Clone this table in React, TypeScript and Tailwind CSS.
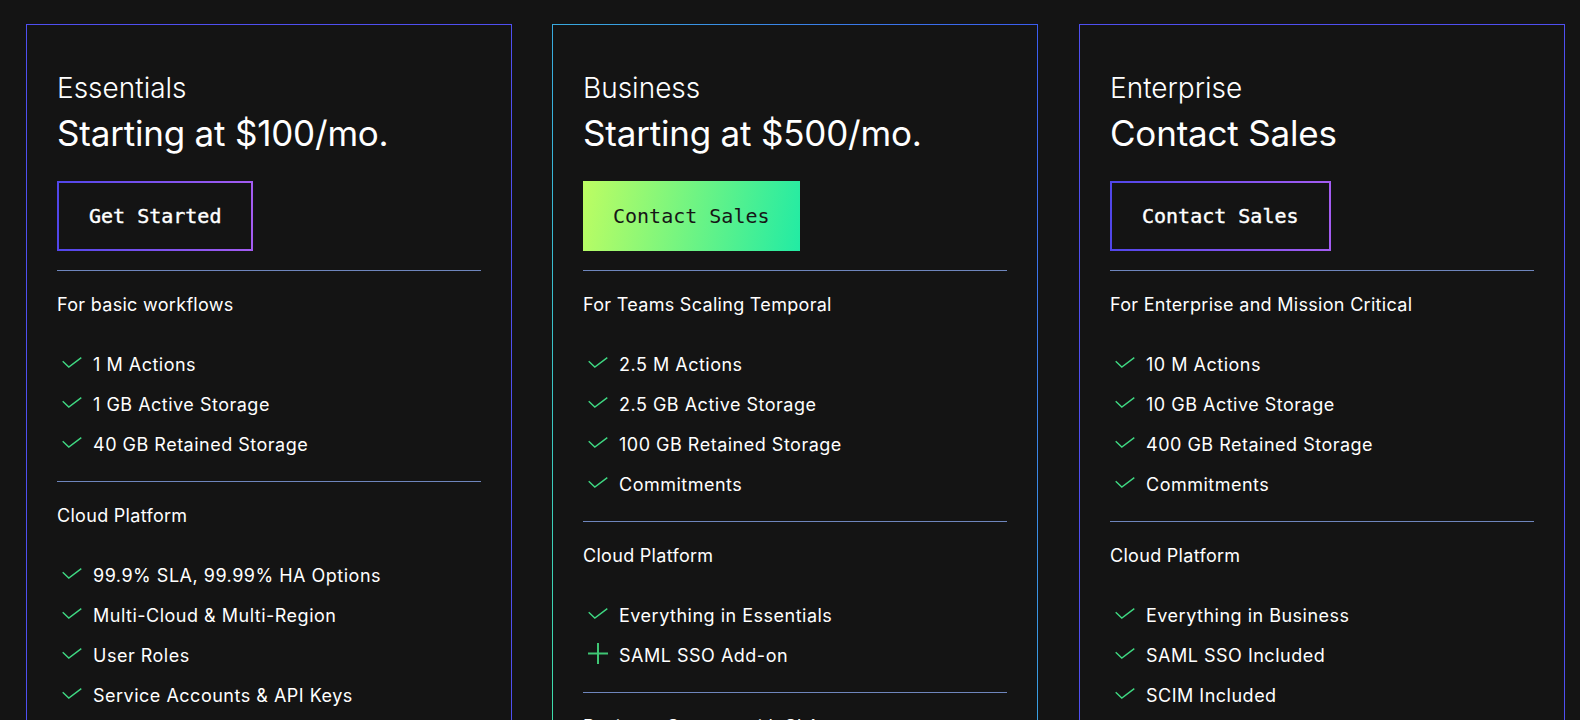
import { ReactNode } from 'react';

type Item = { text: string; plus?: boolean };
type Section = { heading: string; items: Item[] };
type Plan = {
  name: string;
  price: string;
  cta: string;
  featured?: boolean;
  sections: Section[];
};

const plans: Plan[] = [
  {
    name: 'Essentials',
    price: 'Starting at $100/mo.',
    cta: 'Get Started',
    sections: [
      {
        heading: 'For basic workflows',
        items: [{ text: '1 M Actions' }, { text: '1 GB Active Storage' }, { text: '40 GB Retained Storage' }],
      },
      {
        heading: 'Cloud Platform',
        items: [
          { text: '99.9% SLA, 99.99% HA Options' },
          { text: 'Multi-Cloud & Multi-Region' },
          { text: 'User Roles' },
          { text: 'Service Accounts & API Keys' },
          { text: 'Audit Logging' },
        ],
      },
    ],
  },
  {
    name: 'Business',
    price: 'Starting at $500/mo.',
    cta: 'Contact Sales',
    featured: true,
    sections: [
      {
        heading: 'For Teams Scaling Temporal',
        items: [
          { text: '2.5 M Actions' },
          { text: '2.5 GB Active Storage' },
          { text: '100 GB Retained Storage' },
          { text: 'Commitments' },
        ],
      },
      {
        heading: 'Cloud Platform',
        items: [{ text: 'Everything in Essentials' }, { text: 'SAML SSO Add-on', plus: true }],
      },
      {
        heading: 'Business Support with SLAs',
        items: [{ text: 'Email & Chat Support' }],
      },
    ],
  },
  {
    name: 'Enterprise',
    price: 'Contact Sales',
    cta: 'Contact Sales',
    sections: [
      {
        heading: 'For Enterprise and Mission Critical',
        items: [
          { text: '10 M Actions' },
          { text: '10 GB Active Storage' },
          { text: '400 GB Retained Storage' },
          { text: 'Commitments' },
        ],
      },
      {
        heading: 'Cloud Platform',
        items: [
          { text: 'Everything in Business' },
          { text: 'SAML SSO Included' },
          { text: 'SCIM Included' },
          { text: 'Priority Support' },
        ],
      },
    ],
  },
];

function Check() {
  return (
    <svg width="20" height="11" viewBox="0 0 20 11" fill="none" className="shrink-0 -mt-[3px]">
      <path d="M0.7 4.2 L6.8 10 L19.3 0.6" stroke="#3fd882" strokeWidth="1.4" />
    </svg>
  );
}

function Plus() {
  return (
    <svg width="20" height="21" viewBox="0 0 20 21" fill="none" className="shrink-0 -mt-[3px]">
      <path d="M10 0 V21 M0 10.5 H20" stroke="#3fc674" strokeWidth="2" />
    </svg>
  );
}

function CardShell({ featured, children }: { featured?: boolean; children: ReactNode }) {
  if (featured) {
    return (
      <div className="w-[486px] shrink-0 p-px bg-[linear-gradient(to_top_right,#3fe6a0,#38b2dc_45%,#3b5cf0)]">
        <div className="flex flex-col bg-[#141414] px-[30px] pt-[45px] pb-[40px]">{children}</div>
      </div>
    );
  }
  return (
    <div className="flex w-[486px] shrink-0 flex-col border border-[#4f4ff0] bg-[#141414] px-[30px] pt-[45px] pb-[40px]">
      {children}
    </div>
  );
}

function CtaButton({ label, featured }: { label: string; featured?: boolean }) {
  const mono = "font-['DejaVu_Sans_Mono','Liberation_Mono',monospace] text-[20px] leading-[24px]";
  if (featured) {
    return (
      <div className="flex">
        <button
          className={`${mono} h-[70px] px-[30px] text-[#161616] bg-[linear-gradient(100deg,#bdfd62,#22eba4)]`}
        >
          {label}
        </button>
      </div>
    );
  }
  return (
    <div className="flex">
      <div className="p-[2px] bg-[linear-gradient(to_right,#5146ea,#a45cf2)]">
        <button className={`${mono} h-[66px] px-[30px] text-white bg-[#141414] [-webkit-text-stroke:0.4px_white]`}>
          {label}
        </button>
      </div>
    </div>
  );
}

function PlanCard({ plan }: { plan: Plan }) {
  return (
    <CardShell featured={plan.featured}>
      <div className="text-[28px] leading-[36px] font-light text-white">{plan.name}</div>
      <div className="mt-[5px] text-[35px] leading-[44px] text-white tracking-[-0.2px]">{plan.price}</div>
      <div className="mt-[26px] mb-[2px]">
        <CtaButton label={plan.cta} featured={plan.featured} />
      </div>
      {plan.sections.map((s) => (
        <div key={s.heading} className="flex flex-col">
          <div className="mt-[17px] h-px bg-[#6f86bd]" />
          <div className="mt-[22px] text-[18px] leading-[24px] tracking-[0.3px] text-white">{s.heading}</div>
          <ul className="mt-[27px]">
            {s.items.map((it) => (
              <li
                key={it.text}
                className="flex h-[40px] items-center pl-[5px] gap-[11px] text-[18px] tracking-[0.5px] text-white"
              >
                {it.plus ? <Plus /> : <Check />}
                <span>{it.text}</span>
              </li>
            ))}
          </ul>
        </div>
      ))}
    </CardShell>
  );
}

export default function App() {
  return (
    <div className="min-h-screen bg-[#141414] font-['Inter','Noto_Sans',sans-serif]">
      <div className="flex items-start pl-[26px] pt-[24px]">
        <PlanCard plan={plans[0]} />
        <div className="ml-[40px]">
          <PlanCard plan={plans[1]} />
        </div>
        <div className="ml-[41px]">
          <PlanCard plan={plans[2]} />
        </div>
      </div>
    </div>
  );
}
